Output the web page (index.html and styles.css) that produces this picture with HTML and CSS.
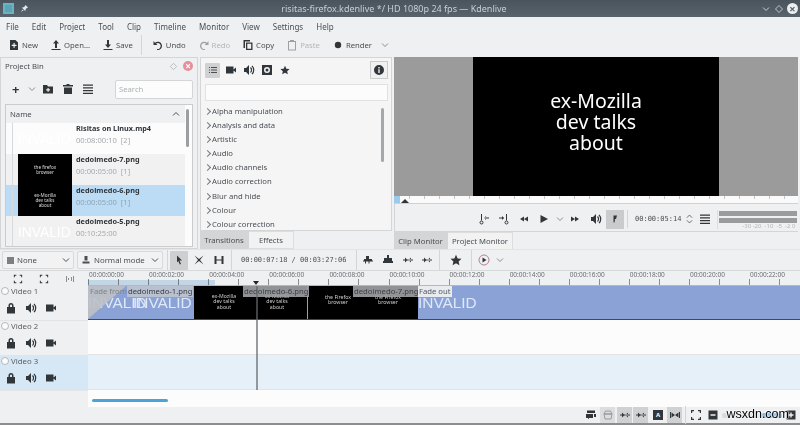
FILE: index.html
```html
<!DOCTYPE html>
<html lang="en">
<head>
<meta charset="utf-8">
<title>Kdenlive</title>
<link rel="stylesheet" href="styles.css">
</head>
<body>
<svg class="defs" aria-hidden="true">
  <symbol id="lock" viewBox="0 0 12 12"><path d="M3.500 5V3.500a2.500 2.500 0 0 1 5 0V5h1.500v6.500H2V5zM5 5h2V3.500a1 1 0 0 0-2 0z"/></symbol>
  <symbol id="speaker" viewBox="0 0 12 12"><path d="M1 4h2l3-3v10L3 8H1z"/><path d="M7.500 3.500a3.500 3.500 0 0 1 0 5M9 1.800a6 6 0 0 1 0 8.400" fill="none" stroke="currentColor" stroke-width="1.200"/></symbol>
  <symbol id="camera" viewBox="0 0 12 12"><path d="M1 2.500h7.500v7H1zM8.500 5.500 11 3.500v5L8.500 6.500z"/></symbol>
  <symbol id="star" viewBox="0 0 12 12"><path d="M6 .8 7.600 4.400l3.900.4-2.900 2.600.8 3.800L6 9.300 2.600 11.200l.8-3.800L.5 4.800l3.900-.4z"/></symbol>
  <symbol id="chev" viewBox="0 0 10 10"><path d="M2 3.500 5 6.500 8 3.500" fill="none" stroke="currentColor" stroke-width="1"/></symbol>
  <symbol id="menu" viewBox="0 0 12 12"><path d="M1 1.500h10v1.300H1zM1 4.300h10v1.300H1zM1 7h10v1.300H1zM1 9.800h10v1.300H1z"/></symbol>
  <symbol id="focus" viewBox="0 0 12 12"><path d="M1 1h3v1.200H2.200V4H1zM8 1h3v3H9.800V2.200H8zM1 8h1.200v1.800H4V11H1zM9.800 8H11v3H8V9.800h1.800z"/></symbol>
  <symbol id="split" viewBox="0 0 12 12"><path d="M1 5.500h10v1H1zM3 3.500 5.500 6 3 8.500zM9 3.500 6.500 6 9 8.500z"/></symbol>
</svg>

<div class="app">
  <header class="titlebar">
    <div class="tb-left">
      <span class="appicon"></span>
      <svg class="tb-pin" viewBox="0 0 10 10"><path d="M6 1 9 4 7.500 4.500 6 6.500 6 8 2 4 3.500 4 5.500 2.500zM3 6 1 9l3-2z"/></svg>
    </div>
    <div class="tb-title">risitas-firefox.kdenlive */ HD 1080p 24 fps — Kdenlive</div>
    <div class="tb-right">
      <svg class="ic10"><use href="#chev"/></svg>
      <svg class="tb-dia" viewBox="0 0 10 10"><path d="M5 1.500 8.500 5 5 8.500 1.500 5z"/></svg>
      <span class="tb-close">×</span>
    </div>
  </header>

  <nav class="menubar">
    <span>File</span><span>Edit</span><span>Project</span><span>Tool</span><span>Clip</span><span>Timeline</span><span>Monitor</span><span>View</span><span>Settings</span><span>Help</span>
  </nav>

  <div class="maintools">
    <span class="mt"><svg class="ic12" viewBox="0 0 12 12"><path d="M2 1h5.500L10 3.500V11H2zM5.500 4v1.800H3.700v1.200h1.800v1.800h1.200V7h1.800V5.800H6.700V4z" fill-rule="evenodd"/></svg>New</span>
    <span class="mt"><svg class="ic12" viewBox="0 0 12 12"><path d="M6 1 9 4.500H7V9H5V4.500H3zM1.500 10h9v1h-9z"/></svg>Open...</span>
    <span class="mt"><svg class="ic12" viewBox="0 0 12 12"><path d="M5 1h2v4.500h2L6 9 3 5.500h2zM1.500 10h9v1h-9z"/></svg>Save</span>
    <i class="vsep"></i>
    <span class="mt"><svg class="ic12" viewBox="0 0 12 12"><path d="M1.500 2v4h4L4 4.500a3 3 0 1 1 1 5.400V11a4.200 4.200 0 1 0-2-7.300z"/></svg>Undo</span>
    <span class="mt off"><svg class="ic12" viewBox="0 0 12 12"><path d="M10.500 2v4h-4L8 4.500a3 3 0 1 0-1 5.400V11a4.200 4.200 0 1 1 2-7.300z"/></svg>Redo</span>
    <span class="mt"><svg class="ic12" viewBox="0 0 12 12"><path d="M1.500 1H8v1.500H3V9H1.500zM4 3.500h6.500V11H4zM5.300 4.800v5h3.900v-5z" fill-rule="evenodd"/></svg>Copy</span>
    <span class="mt off"><svg class="ic12" viewBox="0 0 12 12"><path d="M2 2h2V1h4v1h2v9.500H2zM3 3v7.500h6V3z" fill-rule="evenodd"/></svg>Paste</span>
    <span class="mt"><svg class="ic12" viewBox="0 0 12 12"><circle cx="6" cy="6" r="3.200"/></svg>Render<svg class="ic10 mt-chev"><use href="#chev"/></svg></span>
  </div>

  <main class="workspace">
    <section class="bin">
      <div class="bin-title"><span>Project Bin</span>
        <span class="bin-ctl"><svg class="bin-dia" viewBox="0 0 10 10"><path d="M5 1.500 8.500 5 5 8.500 1.500 5z"/></svg><span class="bin-close">×</span></span>
      </div>
      <div class="bin-tools">
        <b class="plus">+</b>
        <svg class="ic10"><use href="#chev"/></svg>
        <svg class="ic12" viewBox="0 0 12 12"><path d="M1 2h4l1 1.500h5V10.500H1zM5.500 5v1.300H4.200v1.200h1.300v1.300h1.200V7.500H8V6.300H6.700V5z" fill-rule="evenodd"/></svg>
        <svg class="ic12" viewBox="0 0 12 12"><path d="M4.500 1h3v1H11v1.500H1V2h3.500zM2 4.500h8V11H2z"/></svg>
        <svg class="ic12"><use href="#menu"/></svg>
        <div class="bin-search">Search</div>
      </div>
      <div class="bin-list">
        <div class="bin-head"><span>Name</span><svg class="ic10 flip"><use href="#chev"/></svg></div>
        <div class="bin-row">
          <div class="thumb ghost">INVALID</div>
          <div class="bin-meta"><b>Risitas on Linux.mp4</b><small>00:08:00:10 &nbsp;[2]</small></div>
        </div>
        <div class="bin-row alt">
          <div class="thumb black"><span>the firefox<br>browser</span></div>
          <div class="bin-meta"><b>dedoimedo-7.png</b><small>00:00:05:00 &nbsp;[1]</small></div>
        </div>
        <div class="bin-row sel">
          <div class="thumb black"><span>ex-Mozilla<br>dev talks<br>about</span></div>
          <div class="bin-meta"><b>dedoimedo-6.png</b><small>00:00:05:00 &nbsp;[1]</small></div>
        </div>
        <div class="bin-row alt">
          <div class="thumb ghost">INVALID</div>
          <div class="bin-meta"><b>dedoimedo-5.png</b><small>00:10:25:00</small></div>
        </div>
        <span class="bin-scroll"></span>
      </div>
    </section>

    <section class="effects">
      <div class="fx-panel">
        <div class="fx-tools">
          <span class="fx-on"><svg class="ic10" viewBox="0 0 10 10"><path d="M1 2h1v1H1zM3 2h6v1H3zM1 4.500h1v1H1zM3 4.500h6v1H3zM1 7h1v1H1zM3 7h6v1H3z"/></svg></span>
          <svg class="ic12 fx-first"><use href="#camera"/></svg>
          <svg class="ic12"><use href="#speaker"/></svg>
          <svg class="ic12" viewBox="0 0 12 12"><path d="M1 1h10v10H1zM6 3a3 3 0 1 0 0 6 3 3 0 0 0 0-6zM6 4.500a1.500 1.500 0 1 1 0 3 1.500 1.500 0 0 1 0-3z" fill-rule="evenodd"/></svg>
          <svg class="ic10 fx-star"><use href="#star"/></svg>
          <span class="fx-info"><svg class="ic12" viewBox="0 0 12 12"><path d="M6 1a5 5 0 1 0 0 10A5 5 0 0 0 6 1zM5.300 3h1.400v1.400H5.300zM5.300 5.300h1.400V9H5.300z" fill-rule="evenodd"/></svg></span>
        </div>
        <div class="fx-search"></div>
        <ul class="fx-list">
          <li>Alpha manipulation</li><li>Analysis and data</li><li>Artistic</li><li>Audio</li><li>Audio channels</li><li>Audio correction</li><li>Blur and hide</li><li>Colour</li><li>Colour correction</li>
        </ul>
        <span class="fx-scroll"></span>
      </div>
      <div class="tabs"><span class="tab on t-trans">Transitions</span><span class="tab t-fx">Effects</span></div>
    </section>

    <section class="monitor">
      <div class="screen"><div class="frame">ex-Mozilla<br>dev talks<br>about</div></div>
      <div class="mon-ruler"><i class="mon-zone"></i><i class="mon-head"></i></div>
      <div class="mon-ctl">
        <svg class="ic12" viewBox="0 0 12 12"><path d="M3 1h1v6.500H3zM6 4.500h5v1H6zM8 3 6 5 8 7z"/><circle cx="3.500" cy="9.500" r="1.500" fill="none" stroke="currentColor"/></svg>
        <svg class="ic12 g8" viewBox="0 0 12 12"><path d="M8 1h1v6.500H8zM1 4.500h5v1H1zM4 3l2 2-2 2z"/><circle cx="8.500" cy="9.500" r="1.500" fill="none" stroke="currentColor"/></svg>
        <svg class="ic10 g9" viewBox="0 0 10 10"><path d="M5 2.500v5L1 5zM9 2.500v5L5 5z"/></svg>
        <svg class="ic10 g10" viewBox="0 0 10 10"><path d="M1.500 1 9 5l-7.500 4z"/></svg>
        <svg class="ic10 g6 dim"><use href="#chev"/></svg>
        <svg class="ic10 g5" viewBox="0 0 10 10"><path d="M1 2.500 5 5 1 7.500zM5 2.500 9 5 5 7.500z"/></svg>
        <svg class="ic12 g10"><use href="#speaker"/></svg>
        <span class="mon-on g4"><svg class="ic10" viewBox="0 0 10 10"><path d="M3.500 1.500H7L6 5 5 5 4.500 8.500H3.500z"/></svg></span>
        <i class="vsep short g3"></i>
        <span class="tc g7">00:00:05:14</span>
        <svg class="spin g5" viewBox="0 0 8 12"><path d="M1 4.500 4 1.500 7 4.500M1 7.500l3 3 3-3" fill="none" stroke="currentColor" stroke-width=".8"/></svg>
        <svg class="ic12 g6"><use href="#menu"/></svg>
        <div class="meter g6"><i></i><i></i><small>-30 -20 &nbsp;-10 &nbsp;-5 &nbsp;-2 0</small></div>
      </div>
      <div class="tabs"><span class="tab on t-clip">Clip Monitor</span><span class="tab t-proj">Project Monitor</span></div>
    </section>
  </main>

  <div class="tl-tools">
    <span class="combo c1"><i class="sq"></i>None<svg class="ic10"><use href="#chev"/></svg></span>
    <span class="combo c2 g3"><svg class="ic10" viewBox="0 0 10 10"><path d="M3.500 1h3v4.500h-3zM1.500 6.500h7V8.500h-7z"/></svg>Normal mode<svg class="ic10"><use href="#chev"/></svg></span>
    <i class="vsep g4"></i>
    <span class="tl-on g2"><svg class="ic10" viewBox="0 0 10 10"><path d="M3 .5 8 5.500H5.500L7 9 5.800 9.500 4.300 6 3 7.500z"/></svg></span>
    <svg class="ic12 g5" viewBox="0 0 12 12"><path d="M1.500 1.500 6 5 10.500 1.500 7 6 10.500 10.500 6 7 1.500 10.500 5 6z"/></svg>
    <svg class="ic12 g8" viewBox="0 0 12 12"><path d="M1.500 2h2v8h-2zM8.500 2h2v8h-2zM3.500 5.500h5v1h-5z"/></svg>
    <i class="vsep g6"></i>
    <span class="tl-tc g9">00:00:07:18 / 00:03:27:06</span>
    <i class="vsep g10"></i>
    <svg class="ic12 g5" viewBox="0 0 12 12"><path d="M4 2h3v3h3v1.500H11v1H7.500v2H6.500v-2H4v2H3v-2H1v-1h1V5h2z"/></svg>
    <svg class="ic12 g8" viewBox="0 0 12 12"><path d="M5 1h2v3h3v3h1v2H1V7h1V4h3z"/></svg>
    <svg class="ic12 g8"><use href="#split"/></svg>
    <svg class="ic12 g7"><use href="#split"/></svg>
    <i class="vsep g6"></i>
    <svg class="ic12 g10"><use href="#star"/></svg>
    <i class="vsep g9"></i>
    <svg class="ic12 g6 rec" viewBox="0 0 12 12"><circle cx="6" cy="6" r="5" fill="none" stroke="#b9808a"/><path d="M4.500 3.500 8.500 6l-4 2.500z"/></svg>
    <svg class="ic10 g5 dim"><use href="#chev"/></svg>
  </div>

  <section class="timeline">
    <div class="tl-head">
      <div class="tl-corner">
        <svg class="ic10"><use href="#focus"/></svg>
        <svg class="ic10"><use href="#focus"/></svg>
        <svg class="ic10 dim" viewBox="0 0 10 10"><path d="M1 2h1v6H1zM8 2h1v6H8zM3 4h1v2H3zM6 3h1v4H6z"/></svg>
      </div>
      <div class="trk-h"><div class="trk-name"><i></i>Video 1</div><div class="trk-ic"><svg class="ic12"><use href="#lock"/></svg><svg class="ic12"><use href="#speaker"/></svg><svg class="ic12"><use href="#camera"/></svg></div></div>
      <div class="trk-h"><div class="trk-name"><i></i>Video 2</div><div class="trk-ic"><svg class="ic12"><use href="#lock"/></svg><svg class="ic12"><use href="#speaker"/></svg><svg class="ic12"><use href="#camera"/></svg></div></div>
      <div class="trk-h act"><div class="trk-name"><i></i>Video 3</div><div class="trk-ic"><svg class="ic12"><use href="#lock"/></svg><svg class="ic12"><use href="#speaker"/></svg><svg class="ic12"><use href="#camera"/></svg></div></div>
    </div>
    <div class="tl-canvas">
      <div class="ruler">
        <span>00:00:00:00</span><span>00:00:02:00</span><span>00:00:04:00</span><span>00:00:06:00</span><span>00:00:08:00</span><span>00:00:10:00</span><span>00:00:12:00</span><span>00:00:14:00</span><span>00:00:16:00</span><span>00:00:18:00</span><span>00:00:20:00</span><span>00:00:22:00</span>
        <i class="zone"></i>
        <i class="ph-tri"></i>
      </div>
      <div class="trk v1">
        <div class="clip c-inv c-a"><b class="inv i1">INVALID</b><b class="inv i2">INVALID</b><em class="fade-in"></em></div>
        <div class="clip c-blk c-b"><p class="p1">ex-Mozilla<br>dev talks<br>about</p><p class="p2">ex-Mozilla<br>dev talks<br>about</p></div>
        <div class="clip c-blk c-c"><p class="p3">the Firefox<br>browser</p><p class="p4">the Firefox<br>browser</p></div>
        <div class="clip c-inv c-d"><b class="inv i3">INVALID</b></div>
        <span class="lbl l-fade">Fade from</span>
        <span class="lbl l-1">dedoimedo-1.png</span>
        <span class="lbl l-6">dedoimedo-6.png</span>
        <span class="lbl l-7">dedoimedo-7.png</span>
        <span class="lbl l-out">Fade out</span>
      </div>
      <div class="trk v2"></div>
      <div class="trk v3"></div>
      <div class="tl-scroll"><i></i></div>
      <i class="playhead"></i>
    </div>
  </section>

  <footer class="status">
    <svg class="ic12" viewBox="0 0 12 12"><path d="M2 1.500h8V4H2zM1 5h7v4H4l-1 1.500V9H1zM9 5h2v3H9z"/></svg>
    <span class="st-on st-off g3"><svg class="ic12" viewBox="0 0 12 12"><path d="M2 5h8L9 10H3zM3.500 2h5L10 5H2z" fill="none" stroke="currentColor" stroke-width=".8"/></svg></span>
    <span class="st-on g2"><svg class="ic12"><use href="#split"/></svg></span>
    <span class="st-on g1"><svg class="ic12"><use href="#split"/></svg></span>
    <span class="st-a g5">A</span>
    <span class="st-on g4"><svg class="ic12" viewBox="0 0 12 12"><path d="M1 3h1v6H1zM10 3h1v6h-1zM2.500 3.500 6 6 2.500 8.500zM9.500 3.500 6 6l3.500 2.500z"/></svg></span>
    <i class="vsep short g3"></i>
    <svg class="ic12 g4"><use href="#focus"/></svg>
    <svg class="ic12 g5" viewBox="0 0 12 12"><path d="M1.500 1.500h9v9h-9zM3.500 5.300v1.400h5V5.300z" fill-rule="evenodd"/></svg>
    <span class="zoom-track g3"><i></i></span>
    <svg class="ic12 g3" viewBox="0 0 12 12"><path d="M1.500 1.500h9v9h-9zM5.300 3.500v1.800H3.500v1.400h1.800v1.800h1.400V6.700h1.800V5.300H6.700V3.500z" fill-rule="evenodd"/></svg>
    <span class="wm">wsxdn.com</span>
  </footer>
</div>
</body>
</html>
```
FILE: styles.css
```css
* { box-sizing: border-box; }
html, body { margin: 0; padding: 0; }
body { width: 800px; height: 425px; overflow: hidden; background: #eff0f1; color: #31363b; font: 8px "Noto Sans", sans-serif; }
svg { fill: currentColor; flex: none; display: block; }
.defs { width: 0; height: 0; position: absolute; }
.ic10 { width: 10px; height: 10px; }
.ic12 { width: 12px; height: 12px; }
.dim { color: #8a8d90; }
.g1 { margin-left: 1px; }
.g2 { margin-left: 2px; }
.g3 { margin-left: 3px; }
.g4 { margin-left: 4px; }
.g5 { margin-left: 5px; }
.g6 { margin-left: 6px; }
.g7 { margin-left: 7px; }
.g8 { margin-left: 8px; }
.g9 { margin-left: 9px; }
.g10 { margin-left: 10px; }
.app { display: flex; flex-direction: column; height: 425px; border-bottom: 2px solid #8b8d8f; }
.vsep { display: block; width: 1px; background: #d3d5d6; flex: none; height: 20px; }
.vsep.short { height: 18px; }

.titlebar { height: 17px; flex: none; display: flex; align-items: center; justify-content: space-between; background: linear-gradient(#4a545d, #59636c); color: #c8ced3; padding: 0 2px 0 3px; }
.tb-left, .tb-right { display: flex; align-items: center; gap: 3px; }
.tb-left { gap: 6px; }
.appicon { width: 11px; height: 11px; background: #5aa5b5; border: 2px solid #6ab2c4; display: block; }
.tb-pin { width: 9px; height: 9px; fill: #e6e9eb; }
.tb-title { font-size: 9px; margin-left: -2px; }
.tb-dia { width: 10px; height: 10px; fill: none; stroke: #d8dcdf; stroke-width: .8; }
.tb-close { width: 11px; height: 11px; border-radius: 50%; background: #eceef0; color: #5a646d; font: 700 11px/11px "Noto Sans", sans-serif; text-align: center; }

.menubar { height: 17px; flex: none; display: flex; align-items: center; gap: 13px; padding: 1px 0 0 6px; font-size: 8px; color: #4a4f54; }

.maintools { height: 22px; flex: none; display: flex; align-items: center; padding-left: 8px; font-size: 7.700px; color: #4a4f54; }
.mt { display: flex; align-items: center; gap: 2px; margin-right: 12px; }
.mt svg { color: #31363b; }
.mt.off { color: #b4b7ba; }
.mt.off svg { color: #9da1a4; }
.maintools .vsep { margin: 0 10px 0 -4px; }
.mt .mt-chev { margin-left: 6px; color: #8a8d90; }

.workspace { height: 193px; flex: none; display: flex; gap: 2px; padding-top: 1px; }

.bin { width: 198px; flex: none; border: 1px solid #d3d5d6; display: flex; flex-direction: column; padding: 0 4px 1px; }
.bin-title { height: 16px; flex: none; display: flex; justify-content: space-between; align-items: center; font-size: 7.700px; color: #4a4f54; }
.bin-ctl { display: flex; align-items: center; gap: 5px; }
.bin-dia { width: 9px; height: 9px; fill: none; stroke: #a5a9ac; stroke-width: .8; }
.bin-close { width: 10px; height: 10px; border-radius: 50%; background: #e58f9b; color: #fff; font: 700 10px/10px "Noto Sans", sans-serif; text-align: center; }
.bin-tools { height: 30px; flex: none; display: flex; align-items: center; padding-left: 7px; }
.plus { font-size: 13px; font-weight: 700; line-height: 12px; width: 12px; }
.bin-tools .ic10 { margin: 0 5px 0 3px; color: #8a8d90; }
.bin-tools .ic12 { margin-right: 8px; }
.bin-search { margin-left: auto; width: 78px; height: 19px; background: #fcfcfc; border: 1px solid #d3d5d6; border-radius: 2px; color: #aeb1b4; padding: 3px; font-size: 7.700px; line-height: 11px; }
.bin-list { position: relative; flex: 1; border: 1px solid #c9cbcd; background: #fcfcfc; padding-right: 7px; overflow: hidden; }
.bin-head { height: 18px; background: #eff0f1; display: flex; justify-content: space-between; align-items: center; padding: 0 4px; font-size: 7.700px; color: #4a4f54; }
.flip { transform: scaleY(-1); }
.bin-row { height: 31px; display: flex; padding-left: 12px; background-image: linear-gradient(#d8d9da, #d8d9da); background-size: 1px 100%; background-position: 6px 0; background-repeat: no-repeat; }
.bin-row.alt { background-color: #f1f1f2; }
.bin-row.sel { background-color: #bbdcf4; }
.thumb { width: 54px; flex: none; color: #fff; text-align: center; overflow: hidden; }
.thumb.black { background: #000; display: flex; align-items: center; justify-content: center; font-size: 4.600px; line-height: 5px; color: #ddd; }
.thumb.ghost { font: 13.800px/33px "Liberation Sans", sans-serif; white-space: nowrap; text-align: left; }
.bin-meta { padding-left: 4px; display: flex; flex-direction: column; }
.bin-meta b { font-size: 7.300px; font-weight: 700; line-height: 11px; color: #31363b; }
.bin-meta small { font-size: 7.600px; line-height: 12px; color: #a7aaad; }
.bin-row.sel small { color: #8da5b6; }
.bin-scroll { position: absolute; right: 3px; top: 4px; width: 3px; height: 38px; background: #9c9fa2; border-radius: 2px; }

.effects { width: 192px; flex: none; display: flex; flex-direction: column; }
.fx-panel { position: relative; height: 174px; border: 1px solid #d3d5d6; background: #f5f5f6; padding: 3px 4px 0; overflow: hidden; }
.fx-tools { height: 18px; display: flex; align-items: center; gap: 6px; }
.fx-on { width: 15px; height: 15px; background: #cfd1d3; display: flex; align-items: center; justify-content: center; color: #4a4f54; border-radius: 1px; }
.fx-first { margin-left: -1px; }
.fx-star { margin-left: 1px; }
.fx-info { margin-left: auto; width: 18px; height: 18px; margin-right: -1px; border: 1px solid #c9cbcd; display: flex; align-items: center; justify-content: center; background: #f0f0f1; }
.fx-search { height: 17px; background: #fcfcfc; border: 1px solid #e0e1e2; margin: 5px -1px 0 0; }
.fx-list { list-style: none; margin: 3px 0 0; padding: 0; font-size: 7.700px; color: #4a4f54; }
.fx-list li { height: 14.100px; line-height: 14px; padding-left: 7px; position: relative; }
.fx-list li::before { content: ""; position: absolute; left: 0; top: 5px; width: 4px; height: 4px; border-top: 1px solid #777; border-right: 1px solid #777; transform: rotate(45deg); }
.fx-scroll { position: absolute; right: 7px; top: 50px; width: 3px; height: 54px; background: #a5a8ab; border-radius: 2px; }
.tabs { height: 18px; flex: none; display: flex; align-items: stretch; font-size: 7.700px; color: #4a4f54; }
.tab { display: flex; align-items: center; justify-content: center; border: 1px solid #dcdddf; border-left: 0; background: #f2f2f3; }
.tab.on { background: #d3d5d6; border-color: #d3d5d6; }
.t-trans { width: 49px; }
.t-fx { width: 45px; }
.t-clip { width: 54px; }
.t-proj { width: 65px; }

.monitor { flex: 1; min-width: 0; display: flex; flex-direction: column; }
.screen { height: 139px; flex: none; margin-right: 2px; background: #9b9b9b; display: flex; justify-content: center; }
.frame { width: 246px; background: #000; color: #fff; font-size: 19.500px; line-height: 21px; text-align: center; padding-top: 33px; }
.mon-ruler { position: relative; height: 8px; flex: none; margin-right: 2px; border-bottom: 1px solid #cfd1d2; background: repeating-linear-gradient(90deg, #c4c6c8 0 1px, transparent 1px 15px) 0 0 / 100% 3px no-repeat #fafafa; }
.mon-zone { position: absolute; left: 0; top: 0; width: 6px; height: 7px; background: #9ccaea; }
.mon-head { position: absolute; left: 7px; top: 3px; border: 4px solid transparent; border-top: 0; border-bottom: 4px solid #31363b; }
.mon-ctl { height: 28px; flex: none; display: flex; align-items: center; padding: 3px 0 0 83px; margin-right: 2px; border-left: 1px solid #d3d5d6; border-bottom: 1px solid #d3d5d6; }
.mon-on { width: 18px; height: 19px; background: #c9cbcd; display: flex; align-items: center; justify-content: center; }
.tc, .tl-tc { font-family: "DejaVu Sans Mono", monospace; color: #4a4f54; font-size: 7px; white-space: nowrap; }
.spin { width: 7px; height: 12px; }
.meter { width: 80px; flex: none; height: 19px; padding: 1px 0 0 1px; border-left: 1px solid #dcdddf; position: relative; display: flex; flex-direction: column; gap: 2px; }
.meter i { display: block; height: 5px; background: #9b9b9b; }
.meter small { position: absolute; right: 2px; top: 13px; font-size: 6px; line-height: 7px; color: #b4b7ba; white-space: nowrap; }

.tl-tools { height: 22px; flex: none; display: flex; align-items: center; padding-left: 2px; border-top: 1px solid #e3e4e5; border-bottom: 1px solid #d8d9da; }
.combo { height: 18px; display: flex; align-items: center; border: 1px solid #d8d9da; border-radius: 2px; background: #f2f2f3; font-size: 7.800px; color: #4a4f54; padding: 0 2px 0 3px; gap: 3px; white-space: nowrap; }
.combo svg:last-child { margin-left: auto; }
.c1 { width: 72px; }
.c2 { width: 86px; }
.sq { width: 7px; height: 7px; background: #7c8083; display: block; margin: 0 0 0 1px; }
.tl-on { width: 18px; height: 19px; background: #cdcfd1; display: flex; align-items: center; justify-content: center; border-radius: 1px; }

.timeline { height: 136px; flex: none; display: flex; }
.tl-head { width: 88px; flex: none; }
.tl-corner { height: 15px; display: flex; gap: 16px; align-items: center; padding-left: 13px; }
.trk-h { height: 35px; border-bottom: 1px solid #e3e4e5; padding-left: 1px; }
.trk-h.act { background: #d6e8f6; }
.trk-name { display: flex; align-items: center; gap: 2px; height: 10px; font-size: 7.800px; color: #5a5f64; }
.trk-name i { display: block; width: 8px; height: 8px; border-radius: 50%; border: 1px solid #b5b8bb; background: #fbfbfb; }
.trk-ic { display: flex; gap: 8px; padding-left: 4px; margin-top: 6px; }

.tl-canvas { flex: 1; position: relative; min-width: 0; }
.ruler { position: relative; height: 15px; display: flex; border-bottom: 1px solid #b5b8bb; background: repeating-linear-gradient(90deg, #8b8e91 0 1px, transparent 1px 30.050px) 0 bottom / 100% 6px no-repeat; font-size: 6.500px; color: #6a6e72; }
.ruler span { flex: none; width: 60.100px; line-height: 8px; padding-left: 1px; }
.zone { position: absolute; left: 0; bottom: 0; width: 127px; height: 5px; background: #cfe4f3; mix-blend-mode: multiply; }
.ph-tri { position: absolute; left: 165px; bottom: 0; border: 3px solid transparent; border-bottom: 0; border-top: 4px solid #232629; }

.trk { height: 35px; position: relative; border-bottom: 1px solid #e3e4e5; }
.v1 { height: 34px; background: #8aa2d5; border-bottom: 1px solid #3e4a60; }
.v2 { background: #fcfcfc; }
.v3 { background: #e6f0f8; }
.tl-scroll { height: 17px; background: #fcfcfc; padding: 9px 0 0 4px; }
.tl-scroll i { display: block; width: 76px; height: 3px; border-radius: 2px; background: #4ba3d8; }
.playhead { position: absolute; left: 168px; top: 15px; height: 104px; width: 2px; background: rgba(100,104,108,.65); }

.clip { position: absolute; top: 0; bottom: 0; overflow: hidden; }
.c-a { left: 0; width: 106px; background: #8aa2d5; }
.c-b { left: 106px; width: 113px; background: #000; }
.c-c { left: 220px; width: 110px; background: #000; }
.c-d { left: 330px; right: 0; }
.fade-in { position: absolute; left: 0; top: 0; width: 38px; height: 33px; background: rgba(190,193,198,.92); clip-path: polygon(0 0, 100% 0, 0 100%); }
.inv { position: absolute; top: 7px; font: 400 15.400px/20px "Liberation Sans", sans-serif; color: #dfe8f7; }
.i1 { left: 0; }
.i2 { left: 45px; }
.i3 { left: 0; }
.clip p { position: absolute; margin: 0; color: #ccc; text-align: center; font-size: 5.200px; line-height: 5.300px; width: 54px; }
.p1 { left: 3px; top: 8px; }
.p2 { left: 56px; top: 8px; }
.p3 { left: 3px; top: 9px; }
.p4 { left: 53px; top: 9px; }
.lbl { position: absolute; top: 0; height: 11px; font-size: 7.700px; line-height: 11px; padding: 0 1px; white-space: nowrap; color: #3a3f44; background: rgba(160,162,165,.9); }
.l-fade { left: 1px; background: transparent; color: #7f8388; }
.l-1 { left: 39px; background: rgba(200,202,205,.75); }
.l-6 { left: 155px; }
.l-7 { left: 265px; }
.l-out { left: 330px; background: #e8ebf0; color: #55595e; }

.status { height: 16px; flex: none; display: flex; align-items: center; justify-content: flex-end; padding-right: 3px; position: relative; }
.st-on { width: 15px; height: 16px; background: #cfd1d3; display: flex; align-items: center; justify-content: center; }
.st-off { color: #8a8d90; background: #dcdddf; }
.st-a { width: 10px; height: 10px; background: #31363b; color: #fff; font: 700 6px/10px "Noto Sans", sans-serif; text-align: center; }
.zoom-track { width: 60px; height: 5px; border-radius: 2px; background: #d9dadb; display: flex; justify-content: flex-end; }
.zoom-track i { display: block; width: 20px; height: 5px; background: #6fb0de; border-radius: 2px; }
.wm { position: absolute; right: 11px; top: 0; font: 400 12.500px/15px "Liberation Sans", sans-serif; color: #000; text-shadow: 0 0 2px #fff, 0 0 2px #fff, 0 0 2px #fff; }
```
